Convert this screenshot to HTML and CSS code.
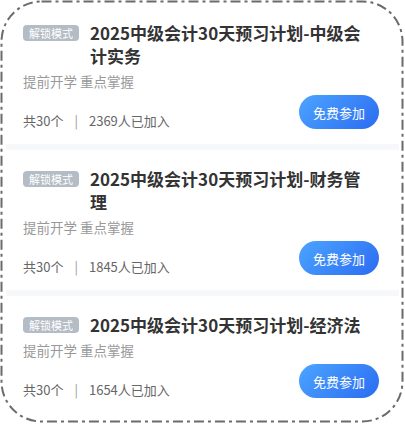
FILE: index.html
```html
<!DOCTYPE html>
<html lang="zh-CN">

<head>
    <meta charset="UTF-8">
    <meta name="viewport" content="width=device-width, initial-scale=1.0">
    <title>预习计划</title>
    <link rel="stylesheet" href="styles.css">
</head>

<body>

    <div class="frame">
        <svg class="frame-line" width="405" height="424" viewBox="0 0 405 424">
            <rect x="1.5" y="1.5" width="401" height="420" rx="40" ry="40" fill="none" stroke="#6b6b6b"
                stroke-width="2" stroke-dasharray="10 4 3 4"></rect>
        </svg>

        <div class="list">
            <div class="card">
                <div class="card-head">
                    <span class="tag">解锁模式</span>
                    <h2 class="title">2025中级会计30天预习计划-中级会计实务</h2>
                </div>
                <p class="sub">提前开学 重点掌握</p>
                <div class="card-foot">
                    <p class="stats">共30个<span class="sep">|</span>2369人已加入</p>
                    <button class="join">免费参加</button>
                </div>
            </div>

            <div class="card">
                <div class="card-head">
                    <span class="tag">解锁模式</span>
                    <h2 class="title">2025中级会计30天预习计划-财务管理</h2>
                </div>
                <p class="sub">提前开学 重点掌握</p>
                <div class="card-foot">
                    <p class="stats">共30个<span class="sep">|</span>1845人已加入</p>
                    <button class="join">免费参加</button>
                </div>
            </div>

            <div class="card">
                <div class="card-head">
                    <span class="tag">解锁模式</span>
                    <h2 class="title">2025中级会计30天预习计划-经济法</h2>
                </div>
                <p class="sub">提前开学 重点掌握</p>
                <div class="card-foot">
                    <p class="stats">共30个<span class="sep">|</span>1654人已加入</p>
                    <button class="join">免费参加</button>
                </div>
            </div>
        </div>
    </div>

</body>

</html>
```

FILE: styles.css
```css
body {
    margin: 0;
    padding: 0;
    background-color: #fff;
    font-family: "Noto Sans CJK SC", "Noto Sans", sans-serif;
}

.frame {
    position: relative;
    width: 405px;
    height: 424px;
    box-sizing: border-box;
    padding: 4px 6px 0;
    overflow: hidden;
}

.frame-line {
    position: absolute;
    left: 0;
    top: 0;
    pointer-events: none;
}

.card {
    padding: 17px 20px 15px 17px;
    background-color: #fff;
    border-bottom: 6px solid #f7f8f9;
}

.card:last-child {
    border-bottom: none;
}

.card-head {
    display: flex;
    align-items: flex-start;
}

.tag {
    flex-shrink: 0;
    margin-top: 4px;
    margin-right: 11px;
    padding: 0 6px;
    height: 16px;
    line-height: 16px;
    font-size: 11px;
    color: #fff;
    background-color: #b4bcc5;
    border-radius: 4px;
}

.title {
    max-width: 276px;
    margin: 0;
    font-size: 17px;
    line-height: 23px;
    font-weight: bold;
    color: #333;
}

.sub {
    margin: 5px 0 0;
    font-size: 13.5px;
    line-height: 18px;
    color: #999;
}

.card-foot {
    display: flex;
    justify-content: space-between;
    align-items: flex-end;
    margin-top: 5px;
}

.stats {
    margin: 0 0 -1px;
    font-size: 13px;
    line-height: 18px;
    color: #666;
}

.sep {
    margin: 0 11px;
    color: #999;
}

.join {
    width: 80px;
    height: 34px;
    padding: 0;
    border: none;
    border-radius: 17px;
    background: linear-gradient(135deg, #4ca4ff, #2b6cf2);
    color: #fff;
    font-family: inherit;
    font-size: 13px;
    cursor: pointer;
}
```
